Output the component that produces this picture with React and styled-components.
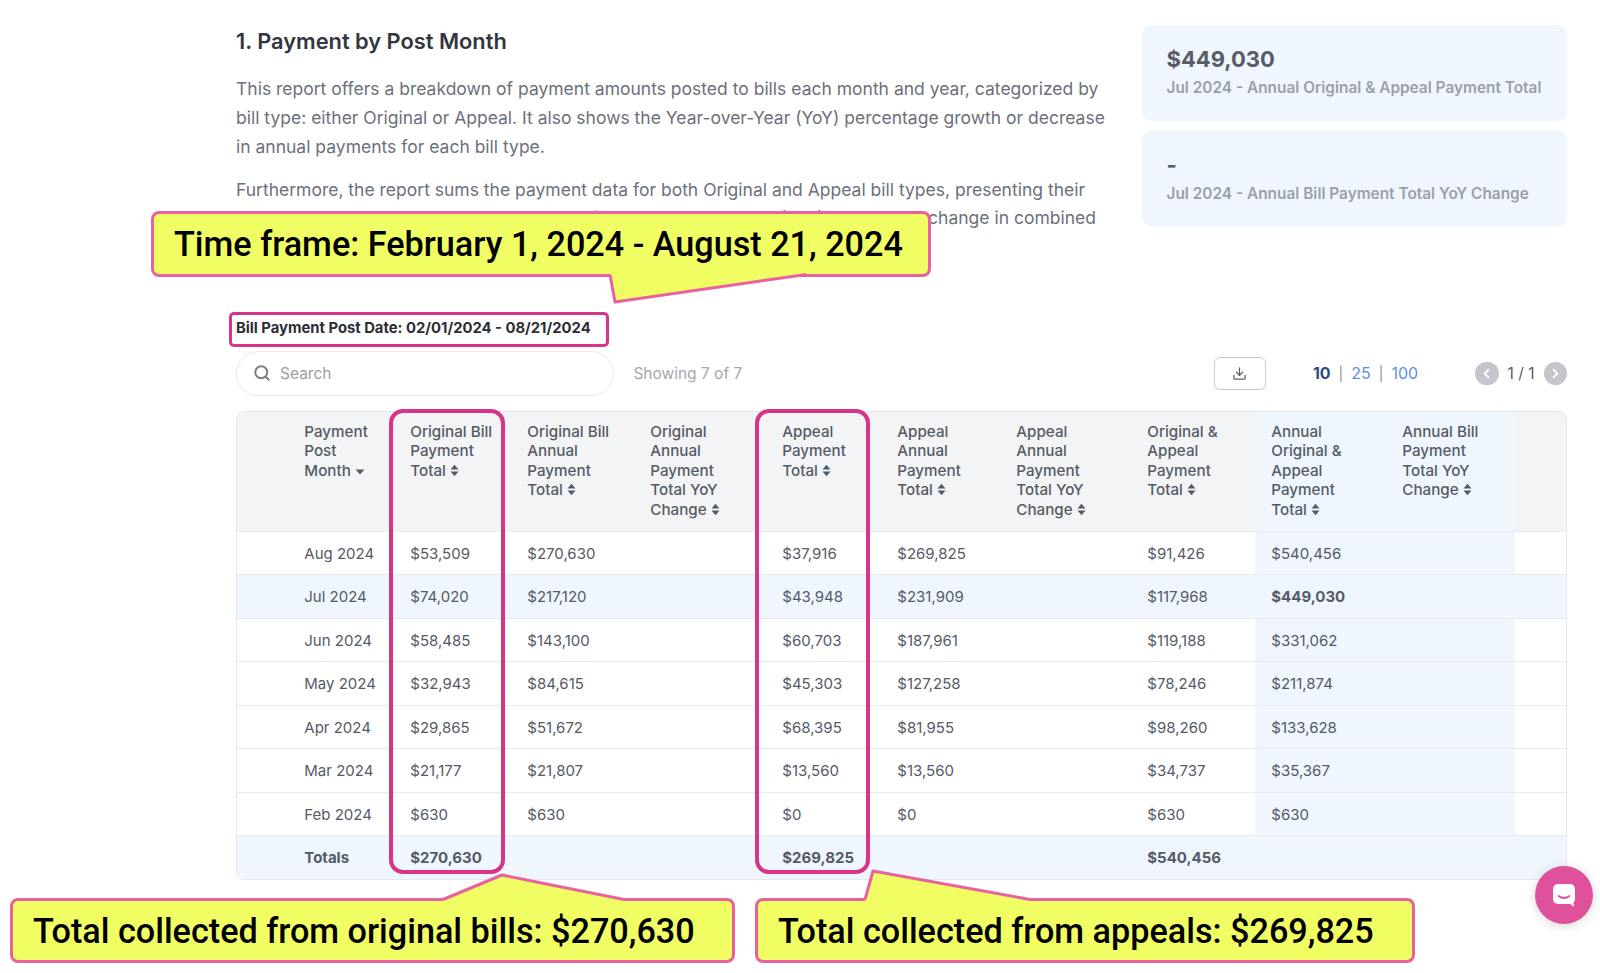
import React from 'react';
import styled, { createGlobalStyle } from 'styled-components';
import { Search, Download, ChevronLeft, ChevronRight } from 'lucide-react';

const GlobalStyle = createGlobalStyle`
  html, body {
    margin: 0;
    padding: 0;
    background: #ffffff;
  }
  body {
    font-family: Inter, Lato, sans-serif;
    color: #555a66;
  }
  * { box-sizing: border-box; }
`;

const headers = [
  { lines: ['Payment', 'Post', 'Month'], icon: 'caret' },
  { lines: ['Original Bill', 'Payment', 'Total'] },
  { lines: ['Original Bill', 'Annual', 'Payment', 'Total'] },
  { lines: ['Original', 'Annual', 'Payment', 'Total YoY', 'Change'] },
  { lines: ['Appeal', 'Payment', 'Total'] },
  { lines: ['Appeal', 'Annual', 'Payment', 'Total'] },
  { lines: ['Appeal', 'Annual', 'Payment', 'Total YoY', 'Change'] },
  { lines: ['Original &', 'Appeal', 'Payment', 'Total'] },
  { lines: ['Annual', 'Original &', 'Appeal', 'Payment', 'Total'], hl: true },
  { lines: ['Annual Bill', 'Payment', 'Total YoY', 'Change'], hl: true },
];

const colWidths = [51, 106, 117, 123, 132, 115, 119, 131, 124, 131, 129, 53];

const rows = [
  ['Aug 2024', '$53,509', '$270,630', '', '$37,916', '$269,825', '', '$91,426', '$540,456', ''],
  ['Jul 2024', '$74,020', '$217,120', '', '$43,948', '$231,909', '', '$117,968', '$449,030', ''],
  ['Jun 2024', '$58,485', '$143,100', '', '$60,703', '$187,961', '', '$119,188', '$331,062', ''],
  ['May 2024', '$32,943', '$84,615', '', '$45,303', '$127,258', '', '$78,246', '$211,874', ''],
  ['Apr 2024', '$29,865', '$51,672', '', '$68,395', '$81,955', '', '$98,260', '$133,628', ''],
  ['Mar 2024', '$21,177', '$21,807', '', '$13,560', '$13,560', '', '$34,737', '$35,367', ''],
  ['Feb 2024', '$630', '$630', '', '$0', '$0', '', '$630', '$630', ''],
];

const totals = ['Totals', '$270,630', '', '', '$269,825', '', '', '$540,456', '', ''];

// speech-bubble tails for the yellow notes, page coordinates
const tails = [
  { a: [610, 274.5], tip: [615, 302], b: [806, 274.5], inset: -4 },
  { a: [443, 899.5], tip: [502, 875], b: [624, 899.5], inset: 4 },
  { a: [865, 899.5], tip: [873, 871], b: [1030, 899.5], inset: 4 },
];

function SortIcon() {
  return (
    <SortSvg width="9" height="13" viewBox="0 0 9 13">
      <path d="M0.5 5.4 L4.5 0.8 L8.5 5.4 Z M0.5 7.6 L4.5 12.2 L8.5 7.6 Z" fill="currentColor" />
    </SortSvg>
  );
}

function CaretIcon() {
  return (
    <SortSvg width="10" height="6" viewBox="0 0 10 6" style={{ verticalAlign: '1px' }}>
      <path d="M0.5 0.5 L9.5 0.5 L5 5.6 Z" fill="currentColor" />
    </SortSvg>
  );
}

function StatCard({ value, label }) {
  return (
    <Card>
      <CardValue>{value}</CardValue>
      <CardLabel>{label}</CardLabel>
    </Card>
  );
}

function App() {
  return (
    <Page>
      <GlobalStyle />
      <Content>
        <TopRow>
          <Intro>
            <Title>1. Payment by Post Month</Title>
            <Para>
              This report offers a breakdown of payment amounts posted to bills each month and year, categorized by
              <br />
              bill type: either Original or Appeal. It also shows the Year-over-Year (YoY) percentage growth or decrease
              <br />
              in annual payments for each bill type.
            </Para>
            <Para>
              Furthermore, the report sums the payment data for both Original and Appeal bill types, presenting their
              <br />
              total annual payments by month together with the Year-over-Year (YoY) percentage change in combined
              <br />
              annual payments for both bill types.
            </Para>
          </Intro>
          <Cards>
            <StatCard value="$449,030" label="Jul 2024 - Annual Original & Appeal Payment Total" />
            <StatCard value="-" label="Jul 2024 - Annual Bill Payment Total YoY Change" />
          </Cards>
        </TopRow>

        <DateLabel>Bill Payment Post Date: 02/01/2024 - 08/21/2024</DateLabel>

        <Toolbar>
          <SearchBox>
            <Search size={18} strokeWidth={2.6} color="#7b7f8a" />
            <SearchInput placeholder="Search" />
          </SearchBox>
          <Showing>Showing 7 of 7</Showing>
          <ToolbarRight>
            <DownloadButton>
              <Download size={15} strokeWidth={2} color="#5a5e69" />
            </DownloadButton>
            <PageSizes>
              <PageSize $active>10</PageSize>
              <Sep>|</Sep>
              <PageSize>25</PageSize>
              <Sep>|</Sep>
              <PageSize>100</PageSize>
            </PageSizes>
            <Pager>
              <PagerButton>
                <ChevronLeft size={15} strokeWidth={3} color="#ffffff" />
              </PagerButton>
              <PagerText>1 / 1</PagerText>
              <PagerButton>
                <ChevronRight size={15} strokeWidth={3} color="#ffffff" />
              </PagerButton>
            </Pager>
          </ToolbarRight>
        </Toolbar>

        <TableWrap>
          <Table>
            <colgroup>
              {colWidths.map((w, i) => (
                <col key={i} style={{ width: w }} />
              ))}
            </colgroup>
            <thead>
              <tr>
                <Th />
                {headers.map((h, i) => (
                  <Th key={i} $hl={h.hl}>
                    {h.lines.map((line, j) => (
                      <HeadLine key={j}>
                        {line}
                        {j === h.lines.length - 1 && (h.icon === 'caret' ? <CaretIcon /> : <SortIcon />)}
                      </HeadLine>
                    ))}
                  </Th>
                ))}
                <Th />
              </tr>
            </thead>
            <tbody>
              {rows.map((r, i) => (
                <Tr key={i} $blue={i === 1}>
                  <Td />
                  {r.map((c, j) => (
                    <Td key={j} $hl={j >= 8} $bold={i === 1 && j === 8}>
                      {c}
                    </Td>
                  ))}
                  <Td />
                </Tr>
              ))}
              <Tr $blue>
                <Td />
                {totals.map((c, j) => (
                  <Td key={j} $bold>
                    {c}
                  </Td>
                ))}
                <Td />
              </Tr>
            </tbody>
          </Table>
        </TableWrap>
      </Content>

      <ColumnMark style={{ left: 389, width: 116 }} />
      <ColumnMark style={{ left: 755, width: 115 }} />
      <LabelMark />

      <Callout style={{ left: 151, top: 211, width: 780, height: 66 }}>
        Time frame: February 1, 2024 - August 21, 2024
      </Callout>
      <Callout style={{ left: 10, top: 898, width: 725, height: 65 }}>
        Total collected from original bills: $270,630
      </Callout>
      <Callout style={{ left: 755, top: 898, width: 660, height: 65 }}>
        Total collected from appeals: $269,825
      </Callout>
      <TailLayer width="1600" height="973" viewBox="0 0 1600 973">
        {tails.map((t, i) => (
          <g key={i}>
            <polygon
              points={`${t.a[0]},${t.a[1] + t.inset} ${t.a[0]},${t.a[1]} ${t.tip[0]},${t.tip[1]} ${t.b[0]},${t.b[1]} ${t.b[0]},${t.b[1] + t.inset}`}
              fill="#f0fd63"
            />
            <polyline
              points={`${t.a[0]},${t.a[1]} ${t.tip[0]},${t.tip[1]} ${t.b[0]},${t.b[1]}`}
              fill="none"
              stroke="#e8629f"
              strokeWidth="3"
              strokeLinejoin="round"
            />
          </g>
        ))}
      </TailLayer>

      <ChatButton>
        <svg width="26" height="26" viewBox="0 0 26 26">
          <rect x="2" y="2" width="22" height="20" rx="5" fill="#ffffff" />
          <path d="M17 20 L23 25 L22 18 Z" fill="#ffffff" />
          <path d="M7.5 14 Q13 18 18.5 14" stroke="#e0519b" strokeWidth="1.8" fill="none" strokeLinecap="round" />
        </svg>
      </ChatButton>
    </Page>
  );
}

const Page = styled.div`
  position: relative;
  width: 1600px;
  height: 973px;
  overflow: hidden;
  background: #ffffff;
`;

const Content = styled.div`
  width: 1567px;
  padding: 24.5px 0 0 236px;
`;

const TopRow = styled.div`
  display: flex;
  justify-content: space-between;
  align-items: flex-start;
`;

const Intro = styled.div`
  width: 880px;
  padding-top: 2px;
`;

const Title = styled.h2`
  margin: 0 0 20.4px;
  font-size: 21.8px;
  line-height: 28.6px;
  font-weight: 600;
  color: #33363e;
`;

const Para = styled.p`
  margin: 0 0 14.3px;
  font-size: 17.5px;
  line-height: 28.6px;
  color: #6c707b;
  white-space: nowrap;

  &:last-child {
    margin-bottom: 0;
  }
`;

const Cards = styled.div`
  width: 425px;
  display: flex;
  flex-direction: column;
  gap: 9px;
`;

const Card = styled.div`
  background: #f0f6fe;
  border-radius: 10px;
  padding: 20.4px 24.5px 22.5px;
`;

const CardValue = styled.div`
  font-size: 22px;
  line-height: 28.6px;
  font-weight: 700;
  color: #575c68;
`;

const CardLabel = styled.div`
  margin-top: 5px;
  font-size: 15.4px;
  line-height: 20.4px;
  font-weight: 600;
  color: #9b9fa9;
`;

const DateLabel = styled.div`
  margin-top: 57px;
  font-size: 14.8px;
  line-height: 20.4px;
  font-weight: 700;
  color: #2b2e35;
`;

const Toolbar = styled.div`
  margin-top: 12.2px;
  height: 45px;
  display: flex;
  align-items: center;
`;

const SearchBox = styled.div`
  width: 378px;
  height: 45px;
  border: 1px solid #e9eaee;
  border-radius: 23px;
  display: flex;
  align-items: center;
  gap: 7px;
  padding-left: 16px;
`;

const SearchInput = styled.input`
  border: none;
  outline: none;
  background: transparent;
  font-family: Inter, Lato, sans-serif;
  font-size: 15.5px;
  color: #555a66;
  width: 280px;

  &::placeholder {
    color: #9a9ea8;
  }
`;

const Showing = styled.span`
  margin-left: 19.4px;
  font-size: 15.5px;
  color: #a3a7b0;
`;

const ToolbarRight = styled.div`
  margin-left: auto;
  display: flex;
  align-items: center;
`;

const DownloadButton = styled.button`
  width: 52px;
  height: 33px;
  border: 1px solid #c9cbd1;
  border-radius: 6px;
  background: #ffffff;
  display: flex;
  align-items: center;
  justify-content: center;
  padding: 0;
  margin-right: 47px;
`;

const PageSizes = styled.div`
  display: flex;
  align-items: center;
  gap: 8px;
  font-size: 16px;
`;

const PageSize = styled.span`
  color: ${(p) => (p.$active ? '#2c4a7c' : '#5d90e6')};
  font-weight: ${(p) => (p.$active ? 700 : 400)};
`;

const Sep = styled.span`
  color: #8a8d95;
  font-size: 14px;
`;

const Pager = styled.div`
  margin-left: 57px;
  display: flex;
  align-items: center;
  gap: 9px;
`;

const PagerButton = styled.span`
  width: 23.5px;
  height: 23.5px;
  border-radius: 50%;
  background: #c4c6cb;
  display: flex;
  align-items: center;
  justify-content: center;
`;

const PagerText = styled.span`
  font-size: 15.5px;
  color: #555a66;
`;

const TableWrap = styled.div`
  margin-top: 15px;
  width: 1331px;
  border: 1px solid #e5e7eb;
  border-radius: 8px;
  overflow: hidden;
`;

const Table = styled.table`
  width: 100%;
  table-layout: fixed;
  border-collapse: separate;
  border-spacing: 0;
`;

const Th = styled.th`
  height: 119px;
  vertical-align: top;
  text-align: left;
  padding: 10px 0 0 16.3px;
  background: ${(p) => (p.$hl ? '#eff6fd' : '#f3f4f6')};
  font-size: 15.2px;
  line-height: 19.4px;
  font-weight: 500;
  color: #555b66;
`;

const HeadLine = styled.span`
  display: block;
  white-space: nowrap;
`;

const SortSvg = styled.svg`
  margin-left: 4px;
  vertical-align: -1px;
  color: #555b66;
`;

const Tr = styled.tr`
  height: 43.5px;
  background: ${(p) => (p.$blue ? '#eff6fd' : '#ffffff')};
`;

const Td = styled.td`
  padding: 0 0 0 16.3px;
  border-top: 1px solid #e9eaed;
  font-size: 15px;
  font-weight: ${(p) => (p.$bold ? 700 : 400)};
  color: #555a66;
  white-space: nowrap;
  background: ${(p) => (p.$hl ? '#eff6fd' : 'transparent')};
`;

const ColumnMark = styled.div`
  position: absolute;
  top: 409px;
  height: 465px;
  border: 4px solid #d6358a;
  border-radius: 14px;
  pointer-events: none;
`;

const LabelMark = styled.div`
  position: absolute;
  left: 229px;
  top: 312px;
  width: 380px;
  height: 35px;
  border: 3px solid #d6358a;
  border-radius: 5px;
  pointer-events: none;
`;

const Callout = styled.div`
  position: absolute;
  display: flex;
  align-items: center;
  padding-left: 20px;
  background: #f0fd63;
  border: 3px solid #e8629f;
  border-radius: 8px;
  font-family: Roboto, "Liberation Sans", sans-serif;
  font-size: 34.2px;
  font-weight: 500;
  color: #000000;
  white-space: nowrap;
`;

const TailLayer = styled.svg`
  position: absolute;
  left: 0;
  top: 0;
  pointer-events: none;
`;

const ChatButton = styled.div`
  position: absolute;
  left: 1535px;
  top: 866px;
  width: 58px;
  height: 58px;
  border-radius: 50%;
  background: #e0519b;
  box-shadow: 0 2px 12px rgba(0, 0, 0, 0.15);
  display: flex;
  align-items: center;
  justify-content: center;
`;

export default App;
